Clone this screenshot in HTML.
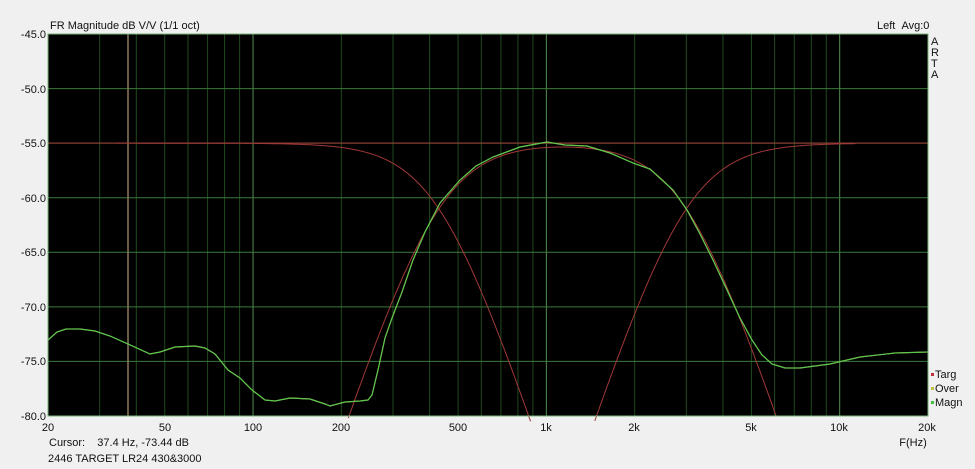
<!DOCTYPE html>
<html><head><meta charset="utf-8"><style>
body{margin:0;background:#f0f0f0;width:975px;height:469px;overflow:hidden;font-family:"Liberation Sans",sans-serif;}
svg{position:absolute;left:0;top:0}
text{font-family:"Liberation Sans",sans-serif;font-size:11px;fill:#111}
</style></head><body>
<svg id="s" width="975" height="469" viewBox="0 0 975 469">
<rect x="48" y="34" width="880" height="382" fill="#000"/>
<g id="grid"></g>
<g id="curves"></g>
<rect x="48" y="34" width="880" height="382" fill="none" stroke="#7ab47a" stroke-width="1"/>
<text x="50" y="29">FR Magnitude dB V/V (1/1 oct)</text>
<text x="877" y="29">Left&#160;&#160;Avg:0</text>
<text x="931" y="45">A</text><text x="931" y="56">R</text><text x="931" y="67">T</text><text x="931" y="78">A</text>
<text x="46" y="38" text-anchor="end">-45.0</text>
<text x="46" y="93" text-anchor="end">-50.0</text>
<text x="46" y="147" text-anchor="end">-55.0</text>
<text x="46" y="202" text-anchor="end">-60.0</text>
<text x="46" y="256" text-anchor="end">-65.0</text>
<text x="46" y="311" text-anchor="end">-70.0</text>
<text x="46" y="365" text-anchor="end">-75.0</text>
<text x="46" y="420" text-anchor="end">-80.0</text>
<g text-anchor="middle">
<text x="48" y="431">20</text><text x="165" y="431">50</text><text x="253" y="431">100</text>
<text x="341" y="431">200</text><text x="458" y="431">500</text><text x="546" y="431">1k</text>
<text x="634" y="431">2k</text><text x="751" y="431">5k</text><text x="839" y="431">10k</text>
<text x="927" y="431">20k</text><text x="913" y="446">F(Hz)</text>
</g>
<text x="49" y="446">Cursor:&#160;&#160;&#160;&#160;37.4 Hz, -73.44 dB</text>
<text x="48" y="462">2446 TARGET LR24 430&amp;3000</text>
<rect x="931" y="373" width="3" height="3" fill="#c03040"/><text x="935" y="378">Targ</text>
<rect x="931" y="387" width="3" height="3" fill="#c0c040"/><text x="935" y="392">Over</text>
<rect x="931" y="401" width="3" height="3" fill="#40c040"/><text x="935" y="406">Magn</text>
</svg>
<script>
const X=f=>48+293.33*Math.log10(f/20), Y=d=>34+(-45-d)*382/35;
const NS="http://www.w3.org/2000/svg";
const g=document.getElementById('grid'), c=document.getElementById('curves');
function line(p,x1,y1,x2,y2,col,w){const l=document.createElementNS(NS,'line');l.setAttribute('x1',x1);l.setAttribute('y1',y1);l.setAttribute('x2',x2);l.setAttribute('y2',y2);l.setAttribute('stroke',col);l.setAttribute('stroke-width',w||1);p.appendChild(l);}
for(let dec of [10,100,1000,10000])for(let m=1;m<10;m++){const f=dec*m;if(f<=20||f>=20000)continue;line(g,X(f),34,X(f),416,m==1?'#4f8f4f':'#1f4a1f');}
for(let d=-50;d>-80;d-=5)line(g,48,Y(d),928,Y(d),'#3a7a3a');
line(g,128,34,128,416,'#8a7a5a',1.5);
function path(pts,col,w){const p=document.createElementNS(NS,'path');p.setAttribute('d','M'+pts.map(a=>a[0].toFixed(1)+','+a[1].toFixed(1)).join('L'));p.setAttribute('fill','none');p.setAttribute('stroke',col);p.setAttribute('stroke-width',w||1);c.appendChild(p);}
line(c,48,Y(-55),928,Y(-55),'#a03838');
const lp=(f,fc)=>{const x=Math.pow(f/fc,4);return 20*Math.log10(1/(1+x));}, hp=(f,fc)=>{const x=Math.pow(f/fc,4);return 20*Math.log10(x/(1+x));};
function curve(fn,f0,f1){const pts=[];for(let i=0;i<=300;i++){const f=f0*Math.pow(f1/f0,i/300);const d=-55+fn(f);if(d<-80.5)continue;pts.push([X(f),Y(d)]);}return pts;}
path(curve(f=>lp(f,430),34,1000),'#a03838');
path(curve(f=>hp(f,430)+lp(f,3000),150,20000),'#a03838');
path(curve(f=>hp(f,3000),1000,11300),'#a03838');
const m=[[48,340],[57,332],[66,329],[80,329],[95,331],[110,336],[128,344],[150,354],[160,352],[175,347],[195,346],[205,348],[215,354],[228,370],[240,378],[252,390],[265,400],[275,401],[290,398],[310,399],[325,404],[330,406],[345,402],[360,401],[368,400],[372,395],[378,370],[385,338],[392,318],[402,292],[413,260],[425,232],[440,203],[460,180],[476,166],[493,157],[520,147],[547,142],[565,145],[587,146],[610,153],[633,163],[650,169],[662,180],[673,190],[687,210],[700,234],[713,260],[727,290],[740,318],[752,340],[762,355],[772,364],[785,368],[800,368],[830,364],[860,357],[895,353],[928,352]];
path(m,'#bcc04a',1.2);path(m,'#50c850',1);
</script>
</body></html>
